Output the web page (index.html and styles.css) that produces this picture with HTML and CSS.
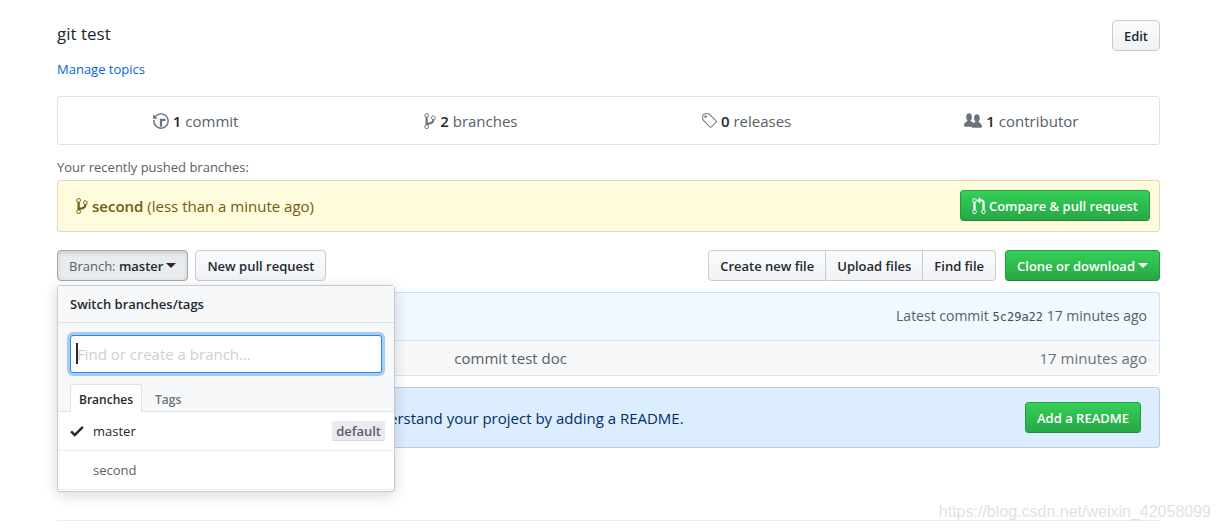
FILE: index.html
```html
<!DOCTYPE html>
<html lang="en">
<head>
<meta charset="utf-8">
<title>git test</title>
<link rel="stylesheet" href="styles.css">
</head>
<body>
<svg class="sprite" aria-hidden="true">
  <symbol id="branch" viewBox="0 0 10 16"><path fill-rule="evenodd" d="M10 5c0-1.11-.89-2-2-2a1.993 1.993 0 0 0-1 3.72v.3c-.02.52-.23.98-.63 1.38-.4.4-.86.61-1.38.63-.83.02-1.48.16-2 .45V4.72a1.993 1.993 0 0 0-1-3.72C.88 1 0 1.89 0 3a2 2 0 0 0 1 1.72v6.56c-.59.35-1 .99-1 1.72 0 1.11.89 2 2 2 1.11 0 2-.89 2-2 0-.53-.2-1-.53-1.36.09-.06.48-.41.59-.47.25-.11.56-.17.94-.17 1.05-.05 1.95-.45 2.75-1.25S8.95 7.77 9 6.73h-.02C9.59 6.37 10 5.73 10 5zM2 1.8c.66 0 1.2.55 1.2 1.2 0 .65-.55 1.2-1.2 1.2C1.35 4.2.8 3.65.8 3c0-.65.55-1.2 1.2-1.2zm0 12.41c-.66 0-1.2-.55-1.2-1.2 0-.65.55-1.2 1.2-1.2.65 0 1.2.55 1.2 1.2 0 .65-.55 1.2-1.2 1.2zm6-8c-.66 0-1.2-.55-1.2-1.2 0-.65.55-1.2 1.2-1.2.65 0 1.2.55 1.2 1.2 0 .65-.55 1.2-1.2 1.2z"/></symbol>
</svg>
<main class="page">
  <header class="about">
    <h1 class="description">git test</h1>
    <button class="btn" type="button">Edit</button>
  </header>
  <a class="topics" href="#topics">Manage topics</a>

  <ul class="summary">
    <li><a href="#commits"><svg class="icon" width="16" height="18" viewBox="0 0 14 16"><path fill-rule="evenodd" d="M8 13H6V6h5v2H8v5zM7 1C4.81 1 2.87 2.02 1.59 3.59L0 2v4h4L2.5 4.5C3.55 3.17 5.17 2.3 7 2.3c3.14 0 5.7 2.56 5.7 5.7s-2.56 5.7-5.7 5.7A5.71 5.71 0 0 1 1.3 8c0-.34.03-.67.09-1H.08C.03 7.33 0 7.66 0 8c0 3.86 3.14 7 7 7s7-3.14 7-7-3.14-7-7-7z"/></svg><span><b>1</b> commit</span></a></li>
    <li><a href="#branches"><svg class="icon" width="12" height="18"><use href="#branch"/></svg><span><b>2</b> branches</span></a></li>
    <li><a href="#releases"><svg class="icon" width="16" height="18" viewBox="0 0 14 16"><path fill-rule="evenodd" d="M7.73 1.73C7.26 1.26 6.62 1 5.96 1H3.5C2.13 1 1 2.13 1 3.5v2.47c0 .66.27 1.3.73 1.77l6.06 6.06c.39.39 1.02.39 1.41 0l4.59-4.59a.996.996 0 0 0 0-1.41L7.73 1.73zM2.38 7.09c-.31-.3-.47-.7-.47-1.13V3.5c0-.88.72-1.59 1.59-1.59h2.47c.42 0 .83.16 1.13.47l6.14 6.13-4.73 4.73-6.13-6.15zM3.01 3h2v2H3V3h.01z"/></svg><span><b>0</b> releases</span></a></li>
    <li><a href="#contributors"><svg class="icon" width="18" height="18" viewBox="0 0 16 16"><path fill-rule="evenodd" d="M16 12.999c0 .439-.45 1-1 1H7.995c-.539 0-.994-.447-.995-.999H1c-.54 0-1-.561-1-1 0-2.634 3-4 3-4s.229-.409 0-1c-.841-.621-1.058-.59-1-3 .058-2.419 1.367-3 2.5-3s2.442.58 2.5 3c.058 2.41-.159 2.379-1 3-.229.59 0 1 0 1s1.549.711 2.42 2.088C9.196 9.369 10 8.999 10 8.999s.229-.409 0-1c-.841-.62-1.058-.59-1-3 .058-2.419 1.367-3 2.5-3s2.437.581 2.495 3c.059 2.41-.158 2.38-1 3-.229.59 0 1 0 1s3.005 1.366 3.005 4"/></svg><span><b>1</b> contributor</span></a></li>
  </ul>

  <h2 class="recent-title">Your recently pushed branches:</h2>
  <section class="recent">
    <p class="recent-branch"><svg class="icon" width="12" height="18"><use href="#branch"/></svg><span><b>second</b> (less than a minute ago)</span></p>
    <button class="btn btn-primary" type="button"><svg class="icon" width="14" height="18" viewBox="0 0 12 16"><path fill-rule="evenodd" d="M11 11.28V5c-.03-.78-.34-1.47-.94-2.06C9.46 2.35 8.78 2.03 8 2H7V0L4 3l3 3V4h1c.27.02.48.11.69.31.21.2.3.42.31.69v6.28A1.993 1.993 0 0 0 10 15a1.993 1.993 0 0 0 1-3.72zm-1 2.92c-.66 0-1.2-.55-1.2-1.2 0-.65.55-1.2 1.2-1.2.65 0 1.2.55 1.2 1.2 0 .65-.55 1.2-1.2 1.2zM4 3c0-1.11-.89-2-2-2a1.993 1.993 0 0 0-1 3.72v6.56A1.993 1.993 0 0 0 2 15a1.993 1.993 0 0 0 1-3.72V4.72c.59-.34 1-.98 1-1.72zm-.8 10c0 .66-.55 1.2-1.2 1.2-.65 0-1.2-.55-1.2-1.2 0-.65.55-1.2 1.2-1.2.65 0 1.2.55 1.2 1.2zM2 4.2C1.34 4.2.8 3.65.8 3c0-.65.55-1.2 1.2-1.2.65 0 1.2.55 1.2 1.2 0 .65-.55 1.2-1.2 1.2z"/></svg>Compare &amp; pull request</button>
  </section>

  <div class="toolbar">
    <div class="branch-select">
      <button class="btn btn-selected" type="button" aria-expanded="true"><span><span class="muted">Branch:</span> master</span><span class="arrow"></span></button>
      <section class="menu">
        <h3 class="menu-title">Switch branches/tags</h3>
        <div class="menu-filter">
          <div class="field">
            <input class="filter-input" type="text" aria-label="Find or create a branch" placeholder="Find or create a branch…">
            <span class="caret"></span>
          </div>
          <div class="tabs" role="tablist">
            <button class="tab tab-active" type="button" role="tab" aria-selected="true">Branches</button>
            <button class="tab" type="button" role="tab" aria-selected="false">Tags</button>
          </div>
        </div>
        <a class="menu-item menu-item-current" href="#master"><svg class="check" width="14" height="18" viewBox="0 0 12 16"><path d="M12 5l-8 8-4-4 1.5-1.5L4 10l6.5-6.5L12 5z"/></svg><span class="menu-name">master</span><span class="label">default</span></a>
        <a class="menu-item" href="#second"><span class="check"></span><span class="menu-name">second</span></a>
      </section>
    </div>
    <button class="btn" type="button">New pull request</button>
    <div class="file-actions">
      <div class="btn-group">
        <button class="btn" type="button">Create new file</button>
        <button class="btn" type="button">Upload files</button>
        <button class="btn" type="button">Find file</button>
      </div>
      <button class="btn btn-primary" type="button">Clone or download<span class="arrow"></span></button>
    </div>
  </div>

  <section class="files">
    <div class="latest"><span>Latest commit <a class="sha" href="#5c29a22">5c29a22</a> 17 minutes ago</span></div>
    <table class="file-table">
      <tr><td class="file-name"></td><td>commit test doc</td><td class="file-age">17 minutes ago</td></tr>
    </table>
  </section>

  <section class="readme">
    <p>Help people interested in this repository understand your project by adding a README.</p>
    <button class="btn btn-primary" type="button">Add a README</button>
  </section>
  <footer class="footer"></footer>
</main>
<div class="watermark">https://blog.csdn.net/weixin_42058099</div>
</body>
</html>
```
FILE: styles.css
```css
* { box-sizing: border-box; }

body {
  margin: 0;
  color: #24292e;
  background: #fff;
  font: 15px/24px "Open Sans", "Noto Sans", sans-serif;
}

h1, h2, h3, p, ul { margin: 0; padding: 0; font-weight: 400; }
a { color: inherit; text-decoration: none; }
b { font-weight: 600; }

.sprite { position: absolute; width: 0; height: 0; }
.icon { flex: none; fill: currentColor; }
.muted { color: #586069; font-weight: 400; }

.page { padding: 20px 60px 0 57px; }

.about { display: flex; justify-content: space-between; align-items: flex-start; }
.description { font-size: 17px; line-height: 28px; }

.topics {
  display: block;
  width: fit-content;
  margin-top: 8px;
  color: #0366d6;
  font-size: 13px;
  line-height: 20px;
}

.btn {
  display: inline-flex;
  align-items: center;
  gap: 3px;
  height: 31px;
  padding: 0 11px;
  border: 1px solid #c8cbcf;
  border-radius: 4px;
  color: #24292e;
  background: linear-gradient(#fafbfc, #eff3f6);
  font: 600 13px/20px "Open Sans", "Noto Sans", sans-serif;
  white-space: nowrap;
}
.btn-primary {
  border-color: #28a043 #279a40 #23873a;
  color: #fff;
  background: linear-gradient(#34d058, #28a745);
}
.btn-selected {
  border-color: #a3a7ab;
  background: #e9ecef;
  box-shadow: inset 0 2px 4px rgba(27, 31, 35, .15);
}
.arrow {
  border: 5px solid transparent;
  border-top-color: currentColor;
  border-bottom: 0;
}

.summary {
  display: grid;
  grid-template-columns: repeat(4, 1fr);
  margin-top: 17px;
  padding: 12px 0 11px;
  border: 1px solid #dfe2e5;
  border-radius: 3px;
  color: #586069;
  list-style: none;
}
.summary a { display: flex; justify-content: center; align-items: center; gap: 4px; }
.summary b { color: #24292e; }
.summary .icon { fill: #6a737d; }

.recent-title { margin: 12px 0 3px; color: #586069; font-size: 13px; line-height: 20px; }
.recent {
  display: flex;
  justify-content: space-between;
  align-items: center;
  padding: 9px 9px 10px 18px;
  border: 1px solid #dfdcba;
  border-radius: 3px;
  color: #735c0f;
  background: #fffbdd;
}
.recent-branch { display: flex; align-items: center; gap: 4px; }

.toolbar { display: flex; gap: 7px; margin-top: 18px; }
.branch-select { position: relative; }
.file-actions { display: flex; gap: 9px; margin-left: auto; }
.btn-group { display: flex; }
.btn-group .btn { border-radius: 0; }
.btn-group .btn + .btn { border-left: 0; }
.btn-group .btn:first-child { border-radius: 4px 0 0 4px; }
.btn-group .btn:last-child { border-radius: 0 4px 4px 0; }

.menu {
  position: absolute;
  z-index: 2;
  top: 35px;
  left: 0;
  width: 338px;
  padding-bottom: 1px;
  border: 1px solid #c8cacd;
  border-radius: 3px;
  background: #fff;
  box-shadow: 0 3px 14px rgba(27, 31, 35, .18);
  color: #586069;
  font-size: 13px;
}
.menu-title {
  padding: 8px 12px;
  border-bottom: 1px solid #dfe2e5;
  background: #f6f8fa;
  color: #24292e;
  font-size: 13px;
  font-weight: 600;
  line-height: 20px;
}
.menu-filter { padding: 12px 12px 0; border-bottom: 1px solid #dfe2e5; background: #f6f8fa; }
.field { position: relative; }
.filter-input {
  display: block;
  width: 100%;
  height: 38px;
  padding: 0 6px;
  border: 1px solid #2188ff;
  border-radius: 3px;
  outline: 0;
  background: #fff;
  box-shadow: 0 0 0 3px #a9cbf2;
  font: 15px/24px "Open Sans", "Noto Sans", sans-serif;
}
.filter-input::placeholder { color: #cdd0d4; opacity: 1; }
.caret { position: absolute; top: 8px; left: 6px; width: 2px; height: 21px; background: #24292e; }
.tabs { display: flex; margin: 11px 0 -1px; }
.tab {
  height: 28px;
  padding: 3px 8px 0;
  border: 1px solid transparent;
  border-bottom: 0;
  border-radius: 3px 3px 0 0;
  background: none;
  color: #6a737d;
  font: 600 12px/20px "Open Sans", "Noto Sans", sans-serif;
}
.tab-active { margin-right: 4px; border-color: #dfe2e5; background: #fff; color: #24292e; }
.menu-item {
  display: flex;
  align-items: center;
  height: 39px;
  padding: 0 9px 0 12px;
  border-bottom: 1px solid #eaecef;
}
.menu-item-current { color: #24292e; }
.check { flex: none; width: 14px; margin-right: 9px; fill: currentColor; }
.menu-name { flex: 1; }
.label {
  padding: 0 4px;
  border-radius: 2px;
  background: #e9eaed;
  box-shadow: inset 0 -1px 0 #d4d6d9;
  color: #586069;
  font-weight: 600;
  line-height: 20px;
}

.files {
  margin-top: 11px;
  border: 1px solid #dfe2e5;
  border-radius: 3px;
}
.latest {
  display: flex;
  justify-content: flex-end;
  margin: -1px -1px 0;
  padding: 11px 12px 12px;
  border: 1px solid #c8e1ff;
  border-radius: 3px 3px 0 0;
  background: #f1f8ff;
  color: #586069;
  font-size: 14px;
}
.sha { color: #444d56; font: 12px/20px "DejaVu Sans Mono", monospace; }
.file-table { width: 100%; border-collapse: collapse; background: #f6f8fa; color: #586069; }
.file-table td { height: 34px; padding: 0; }
.file-table .file-name { width: 36%; }
.file-table .file-age { padding-right: 12px; color: #6a737d; text-align: right; }

.readme {
  display: flex;
  justify-content: space-between;
  align-items: center;
  margin-top: 11px;
  padding: 14px 18px;
  border: 1px solid #bccddf;
  border-radius: 3px;
  background: #dbedff;
  color: #032f62;
}

.footer { margin-top: 72px; border-top: 1px solid #eaecef; }

.watermark {
  position: absolute;
  right: 9px;
  bottom: 8px;
  color: #e2e2e2;
  font: 16px/20px "Liberation Sans", Arial, sans-serif;
}
```
